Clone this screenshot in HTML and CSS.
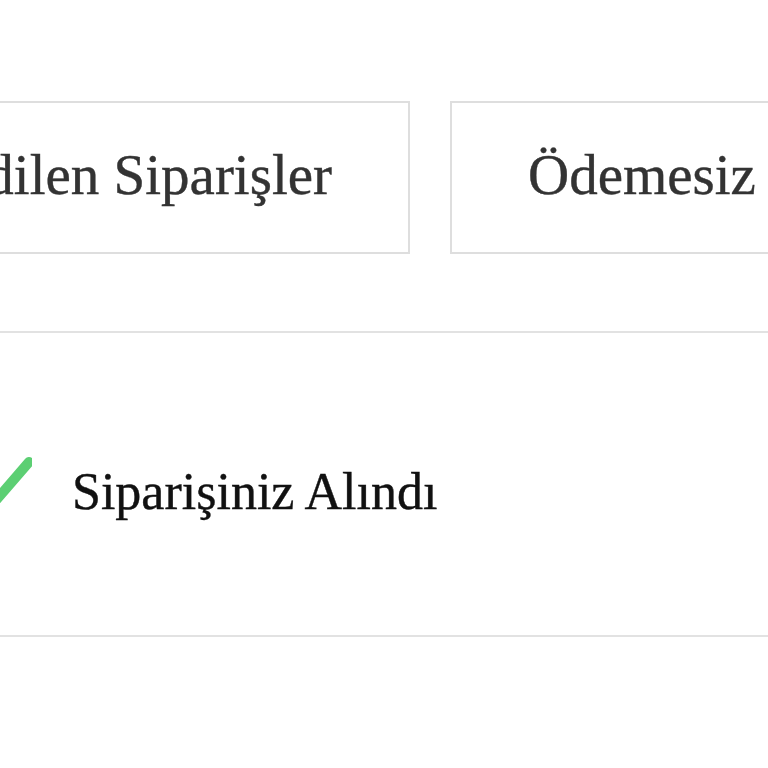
FILE: index.html
```html
<!DOCTYPE html>
<html lang="tr">
<head>
<meta charset="utf-8">
<title>Siparişiniz Alındı</title>
<link rel="stylesheet" href="styles.css">
</head>
<body>
<main class="page">
  <nav class="tabs">
    <div class="tab-slot">
      <a class="tab" href="#">Teslim Edilen Siparişler</a>
    </div>
    <a class="tab tab-second" href="#">Ödemesiz Siparişler</a>
  </nav>
  <section class="card">
    <div class="status">
      <svg class="check" width="64" height="60" viewBox="0 0 64 60" aria-hidden="true">
        <polyline points="8,35 24,51 61,8" fill="none" stroke="#5ccf73" stroke-width="10" stroke-linecap="round" stroke-linejoin="round"/>
      </svg>
      <span class="status-text">Siparişiniz Alındı</span>
    </div>
  </section>
</main>
</body>
</html>
```
FILE: styles.css
```css
html, body {
  margin: 0;
  padding: 0;
  background: #ffffff;
  overflow: hidden;
}
.page {
  width: 768px;
  height: 768px;
  padding-top: 101px;
  box-sizing: border-box;
  font-family: "Liberation Serif", "DejaVu Serif", serif;
}
.tabs {
  display: flex;
  gap: 40px;
  white-space: nowrap;
}
.tab-slot {
  flex: none;
  width: 410px;
  display: flex;
  justify-content: flex-end;
}
.tab {
  flex: none;
  box-sizing: border-box;
  height: 153px;
  display: flex;
  align-items: center;
  padding: 0 76px 6px;
  border: 2px solid #dedede;
  color: #333333;
  font-size: 57px;
  text-decoration: none;
  -webkit-text-stroke: 0.4px #333333;
}
.card {
  margin-top: 77px;
  margin-left: -40px;
  width: 900px;
  height: 306px;
  box-sizing: border-box;
  border-top: 2px solid #e2e2e2;
  border-bottom: 2px solid #e2e2e2;
  display: flex;
  align-items: center;
}
.status {
  display: flex;
  align-items: center;
  gap: 40px;
  margin-left: 8px;
}
.check {
  flex: none;
  display: block;
}
.status-text {
  margin-top: 14px;
  font-size: 52px;
  color: #111111;
  -webkit-text-stroke: 0.4px #111111;
}
```
